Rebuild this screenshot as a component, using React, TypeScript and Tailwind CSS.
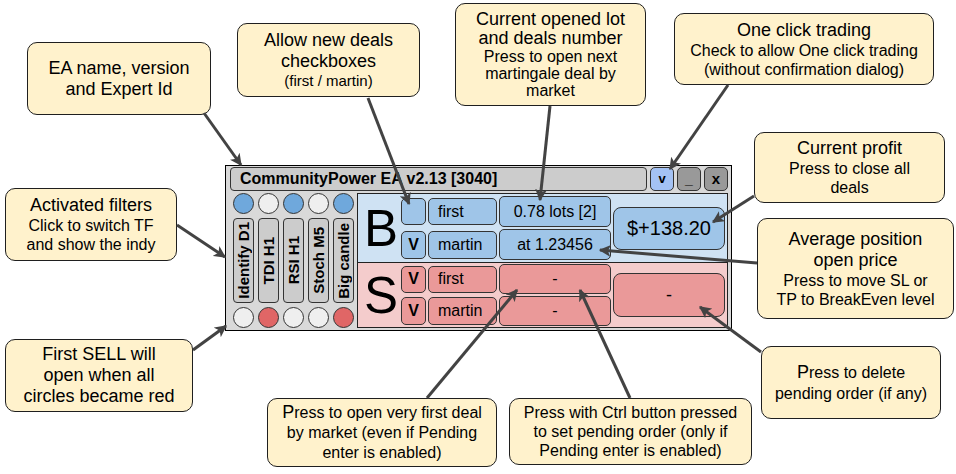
const arrows = [
  [204, 113, 241, 165],
  [368, 98, 409, 204],
  [550, 106, 540, 200],
  [728, 85, 670, 169],
  [754, 196, 713, 222],
  [757, 263, 600, 250],
  [177, 225, 225, 257],
  [193, 350, 226, 326],
  [427, 398, 517, 290],
  [630, 398, 580, 290],
  [761, 352, 700, 307],
];

function Note({ className, children }: { className: string; children: React.ReactNode }) {
  return (
    <div
      className={`absolute flex flex-col items-center justify-center rounded-[10px] border border-[#1f1f1f] bg-[#fff2cc] text-center text-black ${className}`}
    >
      {children}
    </div>
  );
}

function Title({ children }: { children: React.ReactNode }) {
  return <p className="text-[18px] leading-[21px]">{children}</p>;
}

function Small({ children }: { children: React.ReactNode }) {
  return <p className="text-[16px] leading-[19px]">{children}</p>;
}

function Dot({ color }: { color: string }) {
  return <div className={`h-[21px] w-[21px] rounded-full border border-[#333] ${color}`} />;
}

const filters = ["Identify D1", "TDI H1", "RSI H1", "Stoch M5", "Big candle"];
const topDots = ["bg-[#6fa8dc]", "bg-[#efefef]", "bg-[#6fa8dc]", "bg-[#efefef]", "bg-[#6fa8dc]"];
const bottomDots = ["bg-[#efefef]", "bg-[#e06666]", "bg-[#efefef]", "bg-[#efefef]", "bg-[#e06666]"];

function Btn({ className, children }: { className: string; children?: React.ReactNode }) {
  return (
    <div className={`flex items-center rounded-[5px] border border-[#333] ${className}`}>
      {children}
    </div>
  );
}

function Panel() {
  return (
    <div className="absolute left-[225px] top-[165px] flex h-[166px] w-[507px] flex-col border border-black bg-[#d9d9d9] pl-[4px] pr-[3px] pt-[1px]">
      {/* title bar */}
      <div className="flex h-[24px] items-center gap-[3px]">
        <div className="flex h-full flex-1 items-center rounded-[4px] border border-[#333] bg-[#cccccc] pl-[9px] text-[16px] font-bold">
          CommunityPower EA v2.13 [3040]
        </div>
        <Btn className="h-full w-[24px] justify-center bg-[#a4c2f4] text-[13px] font-bold">v</Btn>
        <Btn className="h-full w-[24px] justify-center bg-[#999999] text-[14px] font-bold">_</Btn>
        <Btn className="h-full w-[24px] justify-center bg-[#999999] text-[15px] font-bold">x</Btn>
      </div>

      <div className="mt-[2px] flex gap-[3px]">
        {/* filters */}
        <div className="ml-[3px] flex flex-col gap-[4px]">
          <div className="flex gap-[4px]">
            {topDots.map((c, i) => (
              <Dot key={i} color={c} />
            ))}
          </div>
          <div className="flex h-[85px] gap-[4px]">
            {filters.map((f) => (
              <div
                key={f}
                className="flex w-[21px] items-center justify-center rounded-[4px] border border-[#333] bg-[#cccccc]"
              >
                <span className="rotate-180 text-[15px] font-bold leading-none [writing-mode:vertical-rl]">{f}</span>
              </div>
            ))}
          </div>
          <div className="flex gap-[4px]">
            {bottomDots.map((c, i) => (
              <Dot key={i} color={c} />
            ))}
          </div>
        </div>

        {/* buy / sell */}
        <div className="flex h-[135px] flex-1 flex-col border border-[#222]">
          <div className="flex h-[69px] items-center border-b border-[#222] bg-[#cfe2f3] pr-[1px]">
            <div className="w-[43px] pl-[3px] text-center text-[51px] leading-none">B</div>
            <div className="flex flex-col gap-[2px]">
              <div className="flex h-[31px] items-center gap-[2px]">
                <Btn className="h-[27px] w-[25px] bg-[#9fc5e8]" />
                <Btn className="h-[27px] w-[69px] bg-[#9fc5e8] pl-[9px] text-[16px]">first</Btn>
                <Btn className="h-full w-[112px] justify-center bg-[#9fc5e8] text-[16px]">0.78 lots [2]</Btn>
              </div>
              <div className="flex h-[31px] items-center gap-[2px]">
                <Btn className="h-[28px] w-[25px] justify-center bg-[#9fc5e8] text-[16px] font-bold">V</Btn>
                <Btn className="h-[28px] w-[69px] bg-[#9fc5e8] pl-[9px] text-[16px]">martin</Btn>
                <Btn className="h-full w-[112px] justify-center bg-[#9fc5e8] text-[16px]">at 1.23456</Btn>
              </div>
            </div>
            <Btn className="ml-[2px] h-[43px] w-[112px] justify-center rounded-[8px] bg-[#9fc5e8] text-[20px]">$+138.20</Btn>
          </div>
          <div className="flex flex-1 items-center bg-[#f4cccc] pr-[1px]">
            <div className="w-[43px] pl-[3px] text-center text-[51px] leading-none">S</div>
            <div className="flex flex-col gap-[2px]">
              <div className="flex h-[30px] items-center gap-[2px]">
                <Btn className="h-[27px] w-[25px] justify-center bg-[#ea9999] text-[16px] font-bold">V</Btn>
                <Btn className="h-[27px] w-[69px] bg-[#ea9999] pl-[9px] text-[16px]">first</Btn>
                <Btn className="h-full w-[112px] justify-center bg-[#ea9999] text-[16px]">-</Btn>
              </div>
              <div className="flex h-[30px] items-center gap-[2px]">
                <Btn className="h-[28px] w-[25px] justify-center bg-[#ea9999] text-[16px] font-bold">V</Btn>
                <Btn className="h-[28px] w-[69px] bg-[#ea9999] pl-[9px] text-[16px]">martin</Btn>
                <Btn className="h-full w-[112px] justify-center bg-[#ea9999] text-[16px]">-</Btn>
              </div>
            </div>
            <Btn className="ml-[2px] h-[44px] w-[112px] justify-center rounded-[8px] bg-[#ea9999] text-[18px]">-</Btn>
          </div>
        </div>
      </div>
    </div>
  );
}

export default function App() {
  return (
    <div className="relative h-[474px] w-[956px] overflow-hidden bg-white font-['Liberation_Sans',Arial,sans-serif] text-black">
      <Note className="left-[27px] top-[42px] h-[73px] w-[184px]">
        <Title>EA name, version</Title>
        <Title>and Expert Id</Title>
      </Note>
      <Note className="left-[237px] top-[23px] h-[74px] w-[183px]">
        <Title>Allow new deals</Title>
        <Title>checkboxes</Title>
        <p className="text-[15px] leading-[18px]">(first / martin)</p>
      </Note>
      <Note className="left-[455px] top-[3px] h-[103px] w-[191px]">
        <p className="text-[18px] leading-[19px]">Current opened lot</p>
        <p className="text-[18px] leading-[19px]">and deals number</p>
        <p className="text-[16px] leading-[17px]">Press to open next</p>
        <p className="text-[16px] leading-[17px]">martingale deal by</p>
        <p className="text-[16px] leading-[17px]">market</p>
      </Note>
      <Note className="left-[674px] top-[13px] h-[72px] w-[260px]">
        <Title>One click trading</Title>
        <Small>Check to allow One click trading</Small>
        <Small>(without confirmation dialog)</Small>
      </Note>
      <Note className="left-[754px] top-[132px] h-[71px] w-[191px]">
        <Title>Current profit</Title>
        <Small>Press to close all</Small>
        <Small>deals</Small>
      </Note>
      <Note className="left-[757px] top-[218px] h-[101px] w-[197px]">
        <Title>Average position</Title>
        <Title>open price</Title>
        <Small>Press to move SL or</Small>
        <Small>TP to BreakEven level</Small>
      </Note>
      <Note className="left-[5px] top-[188px] h-[73px] w-[172px]">
        <Title>Activated filters</Title>
        <Small>Click to switch TF</Small>
        <Small>and show the indy</Small>
      </Note>
      <Note className="left-[5px] top-[339px] h-[73px] w-[188px]">
        <Title>First SELL will</Title>
        <Title>open when all</Title>
        <Title>circles became red</Title>
      </Note>
      <Note className="left-[267px] top-[398px] h-[69px] w-[230px]">
        <p className="text-[16px] leading-[20px]">
          <span className="text-[18px]">P</span>ress to open very first deal
        </p>
        <p className="text-[16px] leading-[20px]">by market (even if Pending</p>
        <p className="text-[16px] leading-[20px]">enter is enabled)</p>
      </Note>
      <Note className="left-[509px] top-[398px] h-[67px] w-[243px]">
        <p className="text-[16px] leading-[19px]">Press with Ctrl button pressed</p>
        <p className="text-[16px] leading-[19px]">to set pending order (only if</p>
        <p className="text-[16px] leading-[19px]">Pending enter is enabled)</p>
      </Note>
      <Note className="left-[761px] top-[346px] h-[73px] w-[180px]">
        <p className="text-[16px] leading-[21px]">
          <span className="text-[18px]">P</span>ress to delete
        </p>
        <p className="text-[16px] leading-[21px]">pending order (if any)</p>
      </Note>

      <Panel />

      <svg className="pointer-events-none absolute inset-0" width="956" height="474">
        <defs>
          <marker id="ah" viewBox="0 0 10 10" refX="9" refY="5" markerWidth="4" markerHeight="4" orient="auto">
            <path d="M0,0 L10,5 L0,10 L2.5,5 z" fill="#434343" />
          </marker>
        </defs>
        {arrows.map(([x1, y1, x2, y2], i) => (
          <line key={i} x1={x1} y1={y1} x2={x2} y2={y2} stroke="#434343" strokeWidth="3" markerEnd="url(#ah)" />
        ))}
      </svg>
    </div>
  );
}
